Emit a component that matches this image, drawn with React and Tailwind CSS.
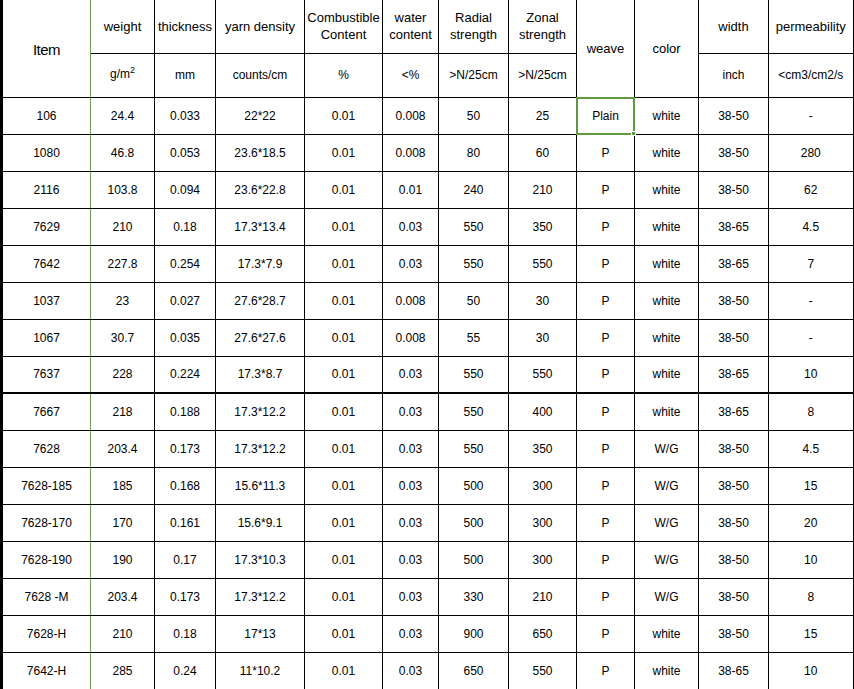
const rows = [
  ['106', '24.4', '0.033', '22*22', '0.01', '0.008', '50', '25', 'Plain', 'white', '38-50', '-'],
  ['1080', '46.8', '0.053', '23.6*18.5', '0.01', '0.008', '80', '60', 'P', 'white', '38-50', '280'],
  ['2116', '103.8', '0.094', '23.6*22.8', '0.01', '0.01', '240', '210', 'P', 'white', '38-50', '62'],
  ['7629', '210', '0.18', '17.3*13.4', '0.01', '0.03', '550', '350', 'P', 'white', '38-65', '4.5'],
  ['7642', '227.8', '0.254', '17.3*7.9', '0.01', '0.03', '550', '550', 'P', 'white', '38-65', '7'],
  ['1037', '23', '0.027', '27.6*28.7', '0.01', '0.008', '50', '30', 'P', 'white', '38-50', '-'],
  ['1067', '30.7', '0.035', '27.6*27.6', '0.01', '0.008', '55', '30', 'P', 'white', '38-50', '-'],
  ['7637', '228', '0.224', '17.3*8.7', '0.01', '0.03', '550', '550', 'P', 'white', '38-65', '10'],
  ['7667', '218', '0.188', '17.3*12.2', '0.01', '0.03', '550', '400', 'P', 'white', '38-65', '8'],
  ['7628', '203.4', '0.173', '17.3*12.2', '0.01', '0.03', '550', '350', 'P', 'W/G', '38-50', '4.5'],
  ['7628-185', '185', '0.168', '15.6*11.3', '0.01', '0.03', '500', '300', 'P', 'W/G', '38-50', '15'],
  ['7628-170', '170', '0.161', '15.6*9.1', '0.01', '0.03', '500', '300', 'P', 'W/G', '38-50', '20'],
  ['7628-190', '190', '0.17', '17.3*10.3', '0.01', '0.03', '500', '300', 'P', 'W/G', '38-50', '10'],
  ['7628 -M', '203.4', '0.173', '17.3*12.2', '0.01', '0.03', '330', '210', 'P', 'W/G', '38-50', '8'],
  ['7628-H', '210', '0.18', '17*13', '0.01', '0.03', '900', '650', 'P', 'white', '38-50', '15'],
  ['7642-H', '285', '0.24', '11*10.2', '0.01', '0.03', '650', '550', 'P', 'white', '38-65', '10'],
];

const widths = [89, 64, 61, 89, 78, 56, 70, 68, 58, 64, 70, 85];

const cell = 'border border-black text-center align-middle p-0';
const green = 'border-r-[#6f9a4c]';

export default function App() {
  return (
    <div className="w-[854px] h-[689px] overflow-hidden bg-white text-black" style={{ fontFamily: '"Liberation Sans", Arial, sans-serif' }}>
      <table className="table-fixed border-collapse w-[854px] border-l-[3px] border-r-2 border-black">
        <colgroup>
          {widths.map((w, i) => (
            <col key={i} style={{ width: w }} />
          ))}
        </colgroup>
        <thead className="text-[13px] leading-[17px]">
          <tr className="h-[53px]">
            <th rowSpan={2} className={`${cell} ${green} border-t-0 font-normal text-[15px] tracking-[-0.5px] pt-[2px]`}>Item</th>
            <th className={`${cell} border-t-0 font-normal`}>weight</th>
            <th className={`${cell} border-t-0 font-normal`}>thickness</th>
            <th className={`${cell} border-t-0 font-normal`}>yarn density</th>
            <th className={`${cell} border-t-0 font-normal`}>Combustible<br />Content</th>
            <th className={`${cell} border-t-0 font-normal`}>water<br />content</th>
            <th className={`${cell} border-t-0 font-normal`}>Radial<br />strength</th>
            <th className={`${cell} border-t-0 font-normal`}>Zonal<br />strength</th>
            <th rowSpan={2} className={`${cell} border-t-0 font-normal`}>weave</th>
            <th rowSpan={2} className={`${cell} border-t-0 font-normal`}>color</th>
            <th className={`${cell} border-t-0 font-normal`}>width</th>
            <th className={`${cell} border-t-0 font-normal`}>permeability</th>
          </tr>
          <tr className="h-[44px] text-[12px]">
            <th className={`${cell} font-normal`}>
              g/m<span className="relative -top-[5px] text-[9px]">2</span>
            </th>
            <th className={`${cell} font-normal`}>mm</th>
            <th className={`${cell} font-normal`}>counts/cm</th>
            <th className={`${cell} font-normal`}>%</th>
            <th className={`${cell} font-normal`}>&lt;%</th>
            <th className={`${cell} font-normal`}>&gt;N/25cm</th>
            <th className={`${cell} font-normal`}>&gt;N/25cm</th>
            <th className={`${cell} font-normal`}>inch</th>
            <th className={`${cell} font-normal text-[12px]`}>&lt;cm3/cm2/s</th>
          </tr>
        </thead>
        <tbody className="text-[12px]">
          {rows.map((r, ri) => (
            <tr key={ri} className={`h-[37px] ${ri === 8 ? 'border-t-2 border-black' : ''}`}>
              {r.map((v, ci) => (
                <td
                  key={ci}
                  className={`${cell} ${ci === 0 ? green : ''} ${ri === 8 ? 'border-t-2' : ''} ${ri === 0 && ci === 8 ? 'relative' : ''}`}
                >
                  {v}
                  {ri === 0 && ci === 8 && (
                    <span className="absolute -inset-px border-2 border-[#5f9a3e]">
                      <span className="absolute -right-[3px] -bottom-[3px] w-[5px] h-[5px] bg-[#5f9a3e] border border-white" />
                    </span>
                  )}
                </td>
              ))}
            </tr>
          ))}
        </tbody>
      </table>
    </div>
  );
}
